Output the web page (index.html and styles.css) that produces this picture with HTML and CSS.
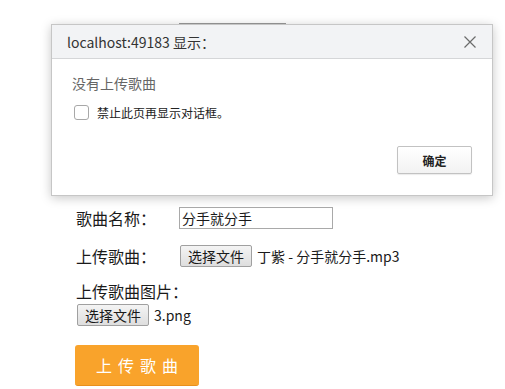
FILE: index.html
```html
<!DOCTYPE html>
<html lang="zh-CN">
<head>
    <meta charset="UTF-8">
    <title>上传歌曲</title>
    <link rel="stylesheet" href="styles.css">
</head>
<body>

    <div class="behind-line"></div>

    <!-- Upload Form -->
    <form class="upload-form">
        <div class="row">
            <label class="label">歌曲名称：</label>
            <input class="text-input" type="text" value="分手就分手">
        </div>
        <div class="row">
            <label class="label">上传歌曲：</label>
            <span class="file-btn">选择文件</span>
            <span class="file-name">丁紫 - 分手就分手.mp3</span>
        </div>
        <div class="row-label">上传歌曲图片：</div>
        <div class="row row-tight">
            <span class="file-btn">选择文件</span>
            <span class="file-name">3.png</span>
        </div>
        <button type="button" class="submit-btn">上传歌曲</button>
    </form>

    <!-- Browser Alert -->
    <div class="alert">
        <div class="alert-head">
            <span class="alert-title">localhost:49183 显示：</span>
            <svg class="alert-close" width="12" height="12" viewBox="0 0 12 12">
                <path d="M0.5 0.5 L11.5 11.5 M11.5 0.5 L0.5 11.5" stroke="#6b6b6b" stroke-width="1.2" fill="none"/>
            </svg>
        </div>
        <div class="alert-body">
            <p class="alert-message">没有上传歌曲</p>
            <div class="alert-check">
                <span class="checkbox"></span>
                <span>禁止此页再显示对话框。</span>
            </div>
            <div class="alert-actions">
                <button type="button" class="ok-btn">确定</button>
            </div>
        </div>
    </div>

</body>
</html>
```

FILE: styles.css
```css
:root {
    --orange: #f9a32b;
    --text: #1a1a1a;
    --gray-border: #a9a9a9;
}

* {
    margin: 0;
    padding: 0;
    box-sizing: border-box;
}

body {
    width: 505px;
    height: 389px;
    background: #ffffff;
    font-family: "Noto Sans CJK SC", "Liberation Sans", sans-serif;
    color: var(--text);
    overflow: hidden;
    position: relative;
}

.behind-line {
    position: absolute;
    left: 179px;
    top: 23px;
    width: 107px;
    height: 1px;
    background: #9a9a9a;
}

.upload-form {
    padding: 207px 0 0 76px;
}

.row {
    display: flex;
    align-items: center;
    height: 22px;
    margin-bottom: 16px;
}

.label {
    width: 103px;
    font-size: 16px;
    line-height: 22px;
}

.text-input {
    width: 154px;
    height: 22px;
    border: 1px solid var(--gray-border);
    padding: 0 2px;
    font-family: inherit;
    font-size: 14px;
    color: var(--text);
    outline: none;
}

.row-label {
    font-size: 16px;
    line-height: 22px;
    margin-top: -3px;
}

.row-tight {
    margin-top: 2px;
    margin-bottom: 19px;
}

.file-btn {
    display: inline-flex;
    align-items: center;
    justify-content: center;
    width: 72px;
    height: 22px;
    border: 1px solid #a0a0a0;
    border-radius: 2px;
    background: linear-gradient(#f4f4f4, #dedede);
    font-size: 14px;
    margin-left: 1px;
}

.file-name {
    margin-left: 5px;
    font-size: 14px;
}

.submit-btn {
    width: 124px;
    height: 41px;
    margin-left: -1px;
    border: none;
    border-bottom: 1px solid #e8901c;
    border-radius: 3px;
    background: var(--orange);
    color: #ffffff;
    font-family: inherit;
    font-size: 16px;
    letter-spacing: 6px;
    padding-left: 6px;
}

.alert {
    position: absolute;
    left: 51px;
    top: 24px;
    width: 442px;
    height: 172px;
    background: #ffffff;
    border: 1px solid #c6c6c6;
    box-shadow: 0 2px 10px rgba(0, 0, 0, 0.22);
}

.alert-head {
    display: flex;
    align-items: center;
    justify-content: space-between;
    height: 34px;
    padding: 0 15px;
    background: #f2f3f5;
    border-bottom: 1px solid #d5d6d8;
}

.alert-title {
    font-size: 14px;
    color: #333333;
}

.alert-close {
    margin-top: 1px;
    margin-right: 1px;
}

.alert-body {
    padding: 14px 20px 0 20px;
}

.alert-message {
    font-size: 14px;
    color: #666666;
    line-height: 20px;
}

.alert-check {
    display: flex;
    align-items: center;
    gap: 8px;
    margin-top: 11px;
    font-size: 12px;
    color: #222222;
}

.checkbox {
    width: 15px;
    height: 15px;
    border: 1px solid #a8a8a8;
    border-radius: 3px;
    background: #ffffff;
    margin-left: 2px;
}

.alert-actions {
    display: flex;
    justify-content: flex-end;
    margin-top: 25px;
}

.ok-btn {
    width: 75px;
    height: 28px;
    border: 1px solid #c2c2c2;
    border-radius: 2px;
    background: linear-gradient(#ffffff, #f2f2f2);
    box-shadow: 0 1px 1px rgba(0, 0, 0, 0.08);
    font-family: inherit;
    font-size: 12px;
    font-weight: bold;
    color: #222222;
}
```
